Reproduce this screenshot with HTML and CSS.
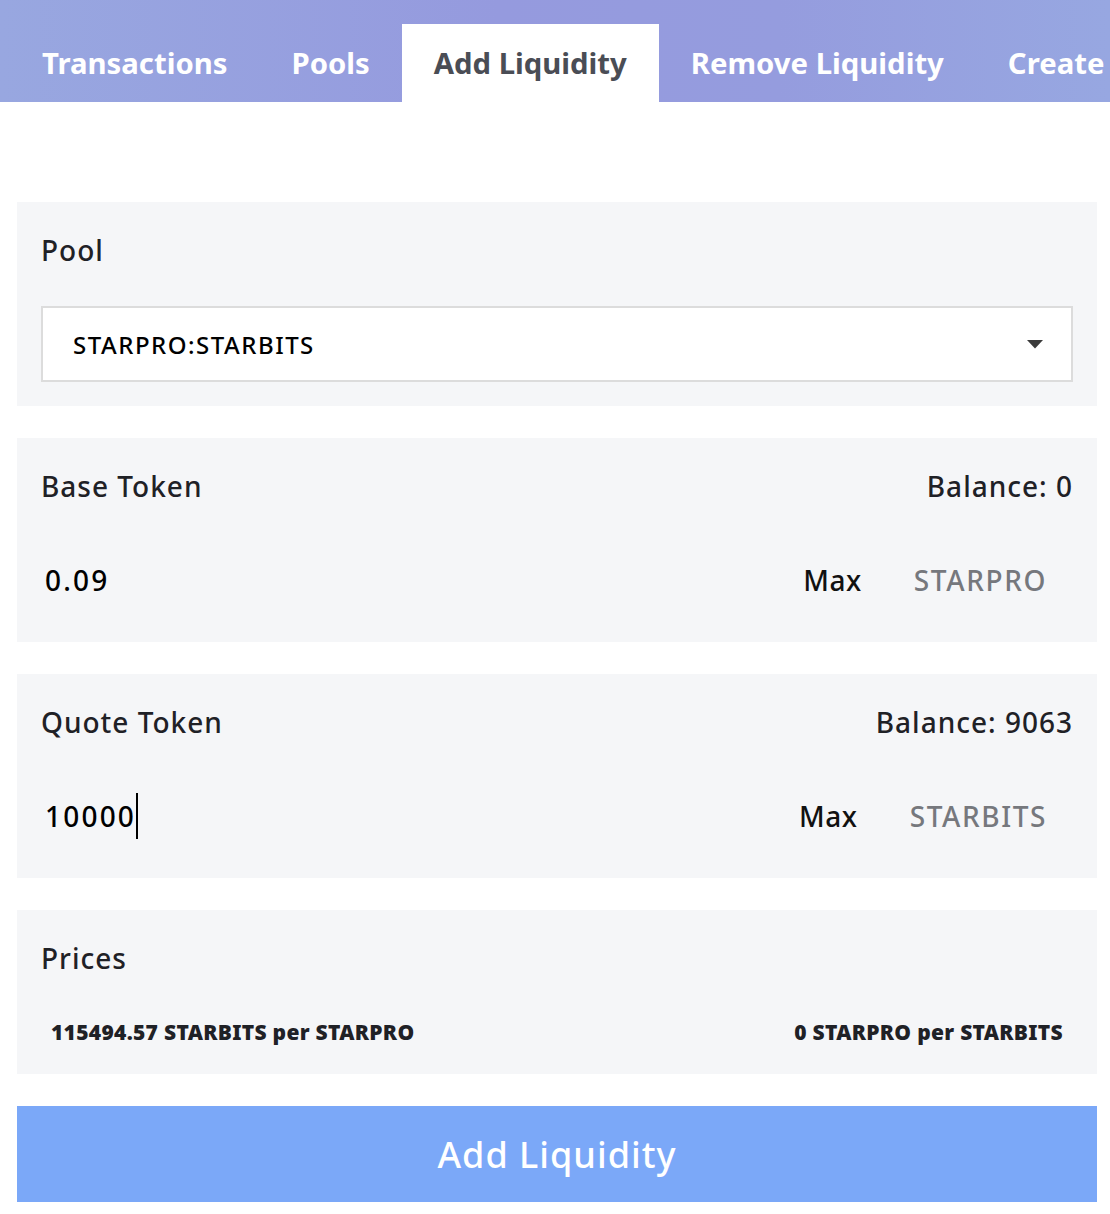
FILE: index.html
```html
<!DOCTYPE html>
<html>
<head>
<meta charset="utf-8">
<link rel="stylesheet" href="styles.css">
</head>
<body>
<nav class="tabs">
  <div class="tab">Transactions</div>
  <div class="tab">Pools</div>
  <div class="tab active">Add Liquidity</div>
  <div class="tab">Remove Liquidity</div>
  <div class="tab">Create</div>
</nav>
<main class="content">
  <section class="card">
    <div class="label-row"><span class="label">Pool</span></div>
    <div class="select">
      <span class="select-text">STARPRO:STARBITS</span>
      <svg class="caret-down" width="16" height="9" viewBox="0 0 16 9"><path d="M0 0 H16 L8 8.5 Z" fill="#3b3b3b"/></svg>
    </div>
  </section>
  <section class="card">
    <div class="label-row"><span class="label">Base Token</span><span class="label">Balance: 0</span></div>
    <div class="input-row">
      <span class="amount">0.09</span>
      <span class="max">Max</span>
      <span class="token">STARPRO</span>
    </div>
  </section>
  <section class="card">
    <div class="label-row"><span class="label">Quote Token</span><span class="label">Balance: 9063</span></div>
    <div class="input-row">
      <span class="amount">10000<span class="cursor"></span></span>
      <span class="max">Max</span>
      <span class="token">STARBITS</span>
    </div>
  </section>
  <section class="card prices">
    <div class="label-row"><span class="label">Prices</span></div>
    <div class="price-row">
      <span>115494.57 STARBITS per STARPRO</span>
      <span>0 STARPRO per STARBITS</span>
    </div>
  </section>
  <button class="submit">Add Liquidity</button>
</main>
</body>
</html>
```
FILE: styles.css
```css
* { box-sizing: border-box; }
html, body { margin: 0; padding: 0; background: #fff; }
body {
  font-family: "Noto Sans", "DejaVu Sans", sans-serif;
  color: #1f2126;
  width: 1110px;
  overflow: hidden;
}
.tabs {
  display: flex;
  align-items: flex-end;
  height: 102px;
  padding-left: 10px;
  background: linear-gradient(90deg, #98a7e0 0%, #959ade 45%, #959cde 70%, #97a7e1 100%);
  white-space: nowrap;
  overflow: hidden;
}
.tab {
  flex: none;
  height: 78px;
  padding: 0 32px;
  display: flex;
  align-items: center;
  font-size: 29.3px;
  font-weight: 700;
  color: #fff;
  letter-spacing: 0;
}
.tab:last-child {
  padding-right: 0;
}
.tab.active {
  background: #fff;
  color: #4a4d55;
}
.content {
  margin: 100px 13px 0 17px;
  display: flex;
  flex-direction: column;
  gap: 32px;
}
.card {
  background: #f5f6f8;
  padding: 24px 24px 24px 24px;
}
.label-row {
  display: flex;
  justify-content: space-between;
  align-items: center;
  height: 48px;
}
.label {
  font-size: 28px;
  font-weight: 500;
  color: #1f2126;
  letter-spacing: 1px;
}
.select {
  margin-top: 32px;
  height: 76px;
  background: #fff;
  border: 2px solid #dcdcdc;
  display: flex;
  align-items: center;
  justify-content: space-between;
  padding: 0 28px 0 30px;
}
.select-text {
  font-size: 24px;
  font-weight: 500;
  color: #000;
  letter-spacing: 1.5px;
}
.input-row {
  margin-top: 42px;
  height: 56px;
  margin-bottom: 10px;
  display: flex;
  align-items: center;
  padding-left: 4px;
}
.amount {
  flex: 1;
  font-size: 28px;
  font-weight: 500;
  color: #000;
  letter-spacing: 2.2px;
  display: flex;
  align-items: center;
}
.cursor {
  display: inline-block;
  width: 2px;
  height: 46px;
  background: #000;
  margin-left: 0;
}
.max {
  font-size: 28px;
  font-weight: 500;
  color: #111;
  letter-spacing: 0.6px;
  margin-right: 52px;
}
.token {
  font-size: 28px;
  font-weight: 500;
  color: #76787d;
  letter-spacing: 1.6px;
  margin-right: 26px;
}
.price-row {
  margin-top: 36px;
  height: 28px;
  margin-bottom: 4px;
  padding: 0 10px;
  display: flex;
  justify-content: space-between;
  align-items: center;
  font-size: 21px;
  font-weight: 900;
  color: #1f2126;
  letter-spacing: 0.3px;
}
.submit {
  height: 96px;
  border: none;
  background: #7ba8f8;
  color: #fff;
  font-family: "Noto Sans", "DejaVu Sans", sans-serif;
  font-size: 36px;
  font-weight: 500;
  letter-spacing: 1px;
  padding: 0;
}
```
